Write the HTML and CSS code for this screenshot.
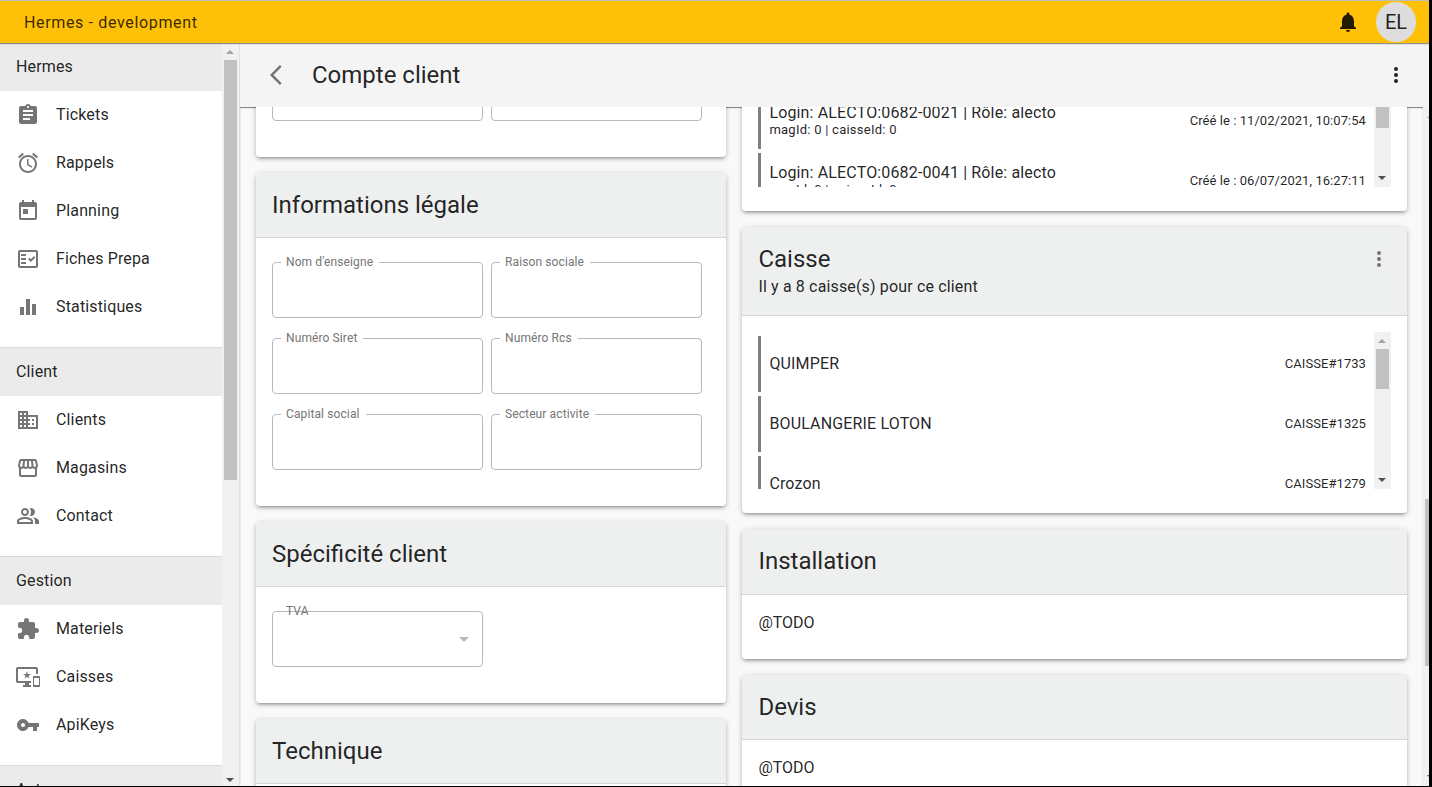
FILE: index.html
```html
<!DOCTYPE html>
<html lang="fr">
<head>
<meta charset="utf-8">
<title>Hermes - development</title>
<link rel="stylesheet" href="styles.css">
</head>
<body>
<div class="window">
  <header class="topbar">
    <span class="brand">Hermes - development</span>
    <svg class="icon bell" viewBox="0 0 24 24"><path d="M12 22c1.1 0 2-.9 2-2h-4c0 1.1.89 2 2 2zm6-6v-5c0-3.07-1.64-5.64-4.5-6.32V4c0-.83-.67-1.5-1.5-1.5s-1.5.67-1.5 1.5v.68C7.63 5.36 6 7.92 6 11v5l-2 2v1h16v-1l-2-2z"/></svg>
    <span class="avatar">EL</span>
  </header>
  <div class="shell">
    <aside class="sidebar">
      <nav class="menu">
        <h2 class="group first">Hermes</h2>
        <a class="entry"><svg class="icon" viewBox="0 0 24 24"><path d="M19 3h-4.18C14.4 1.84 13.3 1 12 1c-1.3 0-2.4.84-2.82 2H5c-1.1 0-2 .9-2 2v14c0 1.1.9 2 2 2h14c1.1 0 2-.9 2-2V5c0-1.1-.9-2-2-2zm-7 0c.55 0 1 .45 1 1s-.45 1-1 1-1-.45-1-1 .45-1 1-1zm2 14H7v-2h7v2zm3-4H7v-2h10v2zm0-4H7V7h10v2z"/></svg>Tickets</a>
        <a class="entry"><svg class="icon" viewBox="0 0 24 24"><path d="M22 5.72l-4.6-3.86-1.29 1.53 4.6 3.86L22 5.72zM7.88 3.39L6.6 1.86 2 5.71l1.29 1.53 4.59-3.85zM12.5 8H11v6l4.75 2.85.75-1.23-4-2.37V8zM12 4c-4.97 0-9 4.03-9 9s4.02 9 9 9c4.97 0 9-4.03 9-9s-4.03-9-9-9zm0 16c-3.87 0-7-3.13-7-7s3.13-7 7-7 7 3.13 7 7-3.13 7-7 7z"/></svg>Rappels</a>
        <a class="entry"><svg class="icon" viewBox="0 0 24 24"><path d="M19 3h-1V1h-2v2H8V1H6v2H5c-1.11 0-1.99.9-1.99 2L3 19c0 1.1.89 2 2 2h14c1.1 0 2-.9 2-2V5c0-1.1-.9-2-2-2zm0 16H5V8h14v11zM7 10h5v5H7z"/></svg>Planning</a>
        <a class="entry"><svg class="icon" viewBox="0 0 24 24"><path d="M20 3H4c-1.1 0-2 .9-2 2v14c0 1.1.9 2 2 2h16c1.1 0 2-.9 2-2V5c0-1.1-.9-2-2-2zm0 16H4V5h16v14zM19.41 10.42L17.99 9l-3.17 3.17-1.41-1.42L12 12.16 14.82 15zM5 7h5v2H5zM5 11h5v2H5zM5 15h5v2H5z"/></svg>Fiches Prepa</a>
        <a class="entry"><svg class="icon" viewBox="0 0 24 24"><path d="M10 20h4V4h-4v16zm-6 0h4v-8H4v8zM16 9v11h4V9h-4z"/></svg>Statistiques</a>
        <h2 class="group">Client</h2>
        <a class="entry"><svg class="icon" viewBox="0 0 24 24"><path d="M12 7V3H2v18h20V7H12zM6 19H4v-2h2v2zm0-4H4v-2h2v2zm0-4H4V9h2v2zm0-4H4V5h2v2zm4 12H8v-2h2v2zm0-4H8v-2h2v2zm0-4H8V9h2v2zm0-4H8V5h2v2zm10 12h-8v-2h2v-2h-2v-2h2v-2h-2V9h8v10zm-2-8h-2v2h2v-2zm0 4h-2v2h2v-2z"/></svg>Clients</a>
        <a class="entry"><svg class="icon" viewBox="0 0 24 24"><path d="M21.9 8.89l-1.05-4.37c-.22-.9-1-1.52-1.91-1.52H5.05c-.9 0-1.69.63-1.9 1.52L2.1 8.89c-.24 1.02-.02 2.06.62 2.88.08.11.19.19.28.29V19c0 1.1.9 2 2 2h14c1.1 0 2-.9 2-2v-6.94c.09-.09.2-.18.28-.28.64-.82.87-1.87.62-2.89zm-2.99-3.9l1.05 4.37c.1.42.01.84-.25 1.17-.14.18-.44.47-.94.47-.61 0-1.14-.49-1.21-1.14L16.98 5l1.93-.01zM13 5h1.96l.54 4.52c.05.39-.07.78-.33 1.07-.22.26-.54.41-.95.41-.67 0-1.22-.59-1.22-1.31V5zM8.49 9.52L9.04 5H11v4.69c0 .72-.55 1.31-1.29 1.31-.34 0-.65-.15-.89-.41-.25-.29-.37-.68-.33-1.07zm-4.45-.16L5.05 5h1.97l-.58 4.86c-.08.65-.6 1.14-1.21 1.14-.49 0-.8-.29-.93-.47-.27-.32-.36-.75-.26-1.17zM5 19v-6.03c.08.01.15.03.23.03.87 0 1.66-.36 2.24-.95.6.6 1.4.95 2.31.95.87 0 1.65-.36 2.23-.93.59.57 1.39.93 2.29.93.84 0 1.64-.35 2.24-.95.58.59 1.37.95 2.24.95.08 0 .15-.02.23-.03V19H5z"/></svg>Magasins</a>
        <a class="entry"><svg class="icon" viewBox="0 0 24 24"><path d="M16.67 13.13C18.04 14.06 19 15.32 19 17v3h4v-3c0-2.18-3.57-3.47-6.33-3.87zM15 12c2.21 0 4-1.79 4-4s-1.79-4-4-4c-.47 0-.91.1-1.33.24C14.5 5.27 15 6.58 15 8s-.5 2.73-1.33 3.76c.42.14.86.24 1.33.24zM9 12c2.21 0 4-1.79 4-4s-1.79-4-4-4-4 1.79-4 4 1.79 4 4 4zm0-6c1.1 0 2 .9 2 2s-.9 2-2 2-2-.9-2-2 .9-2 2-2zm0 7c-2.67 0-8 1.34-8 4v3h16v-3c0-2.66-5.33-4-8-4zm6 5H3v-.99C3.2 16.29 6.3 15 9 15s5.8 1.29 6 2v1z"/></svg>Contact</a>
        <h2 class="group">Gestion</h2>
        <a class="entry"><svg class="icon" viewBox="0 0 24 24"><path d="M20.5 11H19V7c0-1.1-.9-2-2-2h-4V3.500C13 2.120 11.880 1 10.500 1S8 2.120 8 3.500V5H4c-1.100 0-1.990.9-1.990 2v3.800H3.500c1.490 0 2.700 1.210 2.700 2.700s-1.210 2.700-2.700 2.700H2V20c0 1.100.9 2 2 2h3.800v-1.500c0-1.490 1.210-2.700 2.700-2.700 1.490 0 2.700 1.210 2.700 2.700V22H17c1.100 0 2-.9 2-2v-4h1.500c1.380 0 2.500-1.120 2.500-2.500S21.880 11 20.500 11z"/></svg>Materiels</a>
        <a class="entry"><svg class="icon" viewBox="0 0 24 24"><path d="M23 11.010L18 11c-.55 0-1 .45-1 1v9c0 .55.45 1 1 1h5c.55 0 1-.45 1-1v-9c0-.55-.45-.99-1-.99zM23 20h-5v-7h5v7zM20 2H2C.89 2 0 2.890 0 4v12c0 1.100.89 2 2 2h7v2H7v2h8v-2h-2v-2h2v-2H2V4h18v5h2V4c0-1.110-.9-2-2-2zm-8.030 7L11 6l-.97 3H7l2.470 1.760-.94 2.910 2.470-1.800 2.470 1.800-.94-2.910L15 9h-3.030z"/></svg>Caisses</a>
        <a class="entry"><svg class="icon" viewBox="0 0 24 24"><path d="M12.650 10C11.830 7.670 9.610 6 7 6c-3.310 0-6 2.690-6 6s2.690 6 6 6c2.610 0 4.830-1.670 5.650-4H17v4h4v-4h2v-4H12.650zM7 14c-1.100 0-2-.9-2-2s.9-2 2-2 2 .9 2 2-.9 2-2 2z"/></svg>ApiKeys</a>
        <h2 class="group">Autre</h2>
      </nav>
      <div class="scrollbar menu-scroll"><i class="up"></i><i class="thumb menu-thumb"></i><i class="down"></i></div>
    </aside>
    <main class="page">
      <div class="page-bar">
        <svg class="icon" viewBox="0 0 24 24"><path d="M11.670 3.870L9.900 2.100 0 12l9.900 9.900 1.770-1.770L3.540 12z"/></svg>
        <h1 class="page-title">Compte client</h1>
        <svg class="icon dots" viewBox="0 0 24 24"><circle cx="12" cy="6" r="2"/><circle cx="12" cy="12" r="2"/><circle cx="12" cy="18" r="2"/></svg>
      </div>
      <div class="viewport">
        <div class="columns">
          <div class="column left">
            <section class="card">
              <div class="form"><div class="field"></div><div class="field"></div></div>
            </section>
            <section class="card">
              <div class="card-head"><h3>Informations légale</h3></div>
              <div class="form">
                <div class="field"><label>Nom d'enseigne</label></div>
                <div class="field"><label>Raison sociale</label></div>
                <div class="field"><label>Numéro Siret</label></div>
                <div class="field"><label>Numéro Rcs</label></div>
                <div class="field"><label>Capital social</label></div>
                <div class="field"><label>Secteur activite</label></div>
              </div>
            </section>
            <section class="card">
              <div class="card-head"><h3>Spécificité client</h3></div>
              <div class="form"><div class="field select"><label>TVA</label><i class="caret"></i></div></div>
            </section>
            <section class="card">
              <div class="card-head"><h3>Technique</h3></div>
              <div class="form"><div class="field"></div></div>
            </section>
          </div>
          <div class="column right">
            <section class="card">
              <div class="card-list logins">
                <div class="rows">
                  <div class="row"><div><p>Login: ALECTO:0682-0021 | Rôle: alecto</p><small>magId: 0 | caisseId: 0</small></div><small class="meta">Créé le : 11/02/2021, 10:07:54</small></div>
                  <div class="row"><div><p>Login: ALECTO:0682-0041 | Rôle: alecto</p><small>magId: 0 | caisseId: 0</small></div><small class="meta">Créé le : 06/07/2021, 16:27:11</small></div>
                </div>
                <div class="scrollbar"><i class="thumb login-thumb"></i><i class="down"></i></div>
              </div>
            </section>
            <section class="card">
              <div class="card-head with-sub">
                <div><h3>Caisse</h3><p class="sub">Il y a 8 caisse(s) pour ce client</p></div>
                <svg class="icon" viewBox="0 0 24 24"><circle cx="12" cy="6" r="2"/><circle cx="12" cy="12" r="2"/><circle cx="12" cy="18" r="2"/></svg>
              </div>
              <div class="card-list caisses">
                <div class="rows">
                  <div class="row"><p>QUIMPER</p><small class="meta">CAISSE#1733</small></div>
                  <div class="row"><p>BOULANGERIE LOTON</p><small class="meta">CAISSE#1325</small></div>
                  <div class="row"><p>Crozon</p><small class="meta">CAISSE#1279</small></div>
                </div>
                <div class="scrollbar"><i class="up"></i><i class="thumb caisse-thumb"></i><i class="down"></i></div>
              </div>
            </section>
            <section class="card">
              <div class="card-head tall"><h3>Installation</h3></div>
              <p class="note">@TODO</p>
            </section>
            <section class="card">
              <div class="card-head"><h3>Devis</h3></div>
              <p class="note">@TODO</p>
            </section>
          </div>
        </div>
        <div class="scrollbar page-scroll"><i class="up"></i><i class="thumb page-thumb"></i><i class="down"></i></div>
      </div>
    </main>
  </div>
</div>
</body>
</html>
```

FILE: styles.css
```css
* { box-sizing: border-box; }
body {
  margin: 0;
  height: 787px;
  overflow: hidden;
  background: #000;
  color: rgba(0, 0, 0, .87);
  font: 16px/24px Roboto, sans-serif;
}
h1, h2, h3, p { margin: 0; font-weight: 400; }
.window {
  display: flex;
  flex-direction: column;
  width: 1429px;
  height: 786px;
  overflow: hidden;
  background: #fafafa;
}
.icon { flex: none; width: 24px; height: 24px; fill: #757575; }

/* Top bar */
.topbar {
  z-index: 2;
  display: flex;
  align-items: center;
  flex: none;
  height: 43px;
  padding: 0 13px 0 24px;
  border-top: 1px solid #bdbdbd;
  background: #ffc107;
  box-shadow: 0 1px 1px rgba(0, 0, 0, .42);
}
.brand {
  flex: 1;
  height: 16px;
  overflow: hidden;
  color: rgba(0, 0, 0, .8);
  line-height: 17px;
  letter-spacing: .65px;
}
.bell { margin-right: 16px; fill: #231b00; }
.avatar {
  width: 40px;
  height: 40px;
  border-radius: 50%;
  background: #ddd;
  font-size: 20px;
  line-height: 41px;
  text-align: center;
}
.shell { display: flex; flex: 1; min-height: 0; }

/* Sidebar */
.sidebar {
  display: flex;
  flex: none;
  width: 240px;
  border-right: 1px solid #e0e0e0;
  background: #fff;
}
.menu { flex: 1; overflow: hidden; letter-spacing: .15px; }
.group {
  height: 49px;
  margin-top: 16px;
  padding-left: 16px;
  border-top: 1px solid #dcdcdc;
  background: #ebebeb;
  font-size: 16px;
  line-height: 48px;
}
.group.first { height: 48px; margin-top: 0; border-top: 0; }
.entry {
  display: flex;
  align-items: center;
  gap: 16px;
  height: 48px;
  padding: 0 16px;
}

/* Scrollbars */
.scrollbar {
  display: flex;
  flex-direction: column;
  flex: none;
  width: 17px;
  background: #f1f1f1;
}
.menu-scroll { margin-bottom: -3px; }
.up, .down { flex: none; height: 17px; }
.down { margin-top: auto; }
.up::after, .down::after {
  content: "";
  display: block;
  width: 0;
  margin: 0 4px;
  border: solid transparent;
  border-width: 0 4px;
}
.up::after { margin-top: 7px; border-bottom: 4px solid #a3a3a3; }
.down::after { margin-top: 6px; border-top: 4px solid #505050; }
.thumb { flex: none; margin: 0 2px; background: #c1c1c1; }
.menu-thumb { height: 420px; }
.login-thumb { height: 35px; }
.caisse-thumb { height: 40px; }
.page-thumb { height: 167px; margin-top: 375px; }
.page-scroll { z-index: 1; }

/* Page */
.page { display: flex; flex-direction: column; flex: none; width: 1200px; }
.page-bar {
  display: flex;
  align-items: center;
  flex: none;
  height: 64px;
  padding: 0 32px 0 30px;
  background: #f4f4f4;
}
.page-title { flex: 1; margin-left: 18px; font-size: 24px; line-height: 32px; }
.dots { fill: #222; }
.viewport {
  display: flex;
  flex: 1;
  min-height: 0;
  overflow: hidden;
}
.columns {
  display: flex;
  align-items: flex-start;
  gap: 16px;
  width: 1183px;
  padding: 0 16px;
  background: #f9f9f9;
  box-shadow: inset 0 1px 1px rgba(0, 0, 0, .5);
}
.column { display: flex; flex-direction: column; gap: 16px; }
.left { width: 470px; margin-top: -66px; }
.right { width: 665px; margin-top: -30px; }

/* Cards */
.card {
  border-radius: 4px;
  background: #fff;
  box-shadow: 0 3px 3px -2px rgba(0, 0, 0, .24), 0 2px 4px rgba(0, 0, 0, .16), 0 1px 6px rgba(0, 0, 0, .13);
}
.card-head {
  padding: 16px;
  border-bottom: 1px solid #d5d7d7;
  border-radius: 4px 4px 0 0;
  background: #eef0f0;
}
.card-head h3 { font-size: 24px; line-height: 32px; }
.right h3, .right p { padding-left: .4px; }
.tall { height: 66px; }
.with-sub { display: flex; justify-content: space-between; height: 89px; }
.with-sub .icon { margin: 4px 0 0; }
.sub { letter-spacing: .15px; }
.form {
  display: flex;
  flex-wrap: wrap;
  gap: 20px 8px;
  padding: 24px 16px 36px;
}
.field {
  position: relative;
  width: 211px;
  height: 56px;
  border: 1px solid #b8b8b8;
  border-radius: 4px;
}
.field label {
  position: absolute;
  top: -8px;
  left: 8px;
  padding: 0 6px 0 5px;
  background: #fff;
  color: #757575;
  font-size: 12px;
  line-height: 14px;
  letter-spacing: .11px;
}
.select label { background: none; }
.caret {
  position: absolute;
  top: 25px;
  right: 13px;
  border: solid transparent;
  border-width: 5px 5px 0;
  border-top-color: #b8b8b8;
}

/* Lists */
.card-list { display: flex; padding: 16px 16px 24px; }
.rows { display: flex; flex-direction: column; flex: 1; gap: 4px; overflow: hidden; }
.logins .rows { height: 94px; }
.caisses .rows { height: 157px; padding-top: 4px; }
.row {
  display: flex;
  align-items: center;
  justify-content: space-between;
  flex: none;
  height: 56px;
  padding: 0 8px 2px;
  border-left: 3px solid #808080;
}
.row p { line-height: 19px; letter-spacing: .15px; }
.row small { display: block; padding-left: .4px; font-size: 13px; line-height: 15px; letter-spacing: .25px; }
.row .meta { padding: 0; letter-spacing: .06px; }
.right .note { padding: 16px 16px 24px 16.4px; }
```
